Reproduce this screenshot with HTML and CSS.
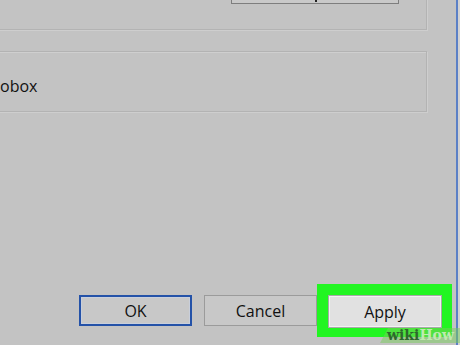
FILE: index.html
```html
<!DOCTYPE html>
<html>
<head>
<meta charset="utf-8">
<link rel="stylesheet" href="styles.css">
</head>
<body>
<div class="window">
  <div class="group group-top">
    <div class="top-btn"><span class="tick"></span></div>
  </div>
  <div class="group group-mid">
    <span class="label">obox</span>
  </div>
  <div class="spacer"></div>
  <div class="buttons">
    <button class="btn btn-ok">OK</button>
    <button class="btn">Cancel</button>
    <div class="highlight"><button class="btn btn-apply">Apply</button></div>
  </div>
</div>
<div class="watermark"><span class="wiki">wiki</span><span class="how">How</span></div>
</body>
</html>
```
FILE: styles.css
```css
html, body {
  margin: 0;
  padding: 0;
}
body {
  width: 460px;
  height: 345px;
  overflow: hidden;
  background: #d2d2d2;
  font-family: "Open Sans", "Noto Sans", sans-serif;
  position: relative;
}
.window {
  width: 456px;
  height: 345px;
  background: #c3c3c3;
  border-right: 2px solid #5b80c6;
  display: flex;
  flex-direction: column;
  overflow: hidden;
}
.group {
  border: 1px solid #b3b3b3;
  box-shadow: inset 1px 1px 0 #cfcfcf, 1px 1px 0 #cecece;
  margin-left: -10px;
  width: 437px;
  box-sizing: border-box;
}
.group-top {
  margin-top: -10px;
  height: 40px;
  display: flex;
  justify-content: flex-end;
  padding-right: 27px;
}
.top-btn {
  width: 168px;
  height: 30px;
  margin-top: -17px;
  box-sizing: border-box;
  border: 1px solid #7e7e7e;
  background: #c9c9c9;
  display: flex;
  justify-content: center;
  align-items: flex-end;
}
.tick {
  width: 2px;
  height: 3px;
  margin-left: 2px;
  margin-bottom: 1px;
  background: #222;
}
.group-mid {
  margin-top: 21px;
  height: 61px;
  display: flex;
  align-items: center;
}
.label {
  font-size: 16px;
  color: #111;
  margin-left: 9px;
  margin-top: 8px;
}
.spacer {
  flex: 1;
}
.buttons {
  display: flex;
  justify-content: flex-end;
  align-items: center;
  gap: 12px;
  padding-right: 4px;
  margin-bottom: 8px;
}
.btn {
  width: 113px;
  height: 31px;
  box-sizing: border-box;
  border: 1px solid #9b9b9b;
  background: #c8c8c8;
  font-family: "Open Sans", "Noto Sans", sans-serif;
  font-size: 16px;
  color: #111;
  padding: 0;
  margin: 0;
}
.btn-ok {
  border: 2px solid #2452a8;
  box-shadow: inset 0 0 0 1px #c9cfdb;
}
.highlight {
  background: #22f522;
  padding: 11px 10px 9px 11px;
  margin-left: -12px;
  display: flex;
}
.btn-apply {
  width: 114px;
  height: 33px;
  background: #e1e1e1;
  border: 1px solid #a8a8a8;
  box-shadow: inset 0 0 0 1px #f2f2f2;
}
.watermark {
  position: absolute;
  right: 0;
  bottom: 2px;
  width: 73px;
  height: 15px;
  padding-left: 7px;
  background: rgba(120, 205, 90, 0.5);
  clip-path: polygon(8px 0, 100% 0, 100% 100%, 0 100%);
  font-family: "DejaVu Serif", serif;
  font-weight: bold;
  font-size: 14px;
  line-height: 15px;
  white-space: nowrap;
}
.wiki {
  color: #2d682d;
}
.how {
  color: #bfeab0;
}
```
